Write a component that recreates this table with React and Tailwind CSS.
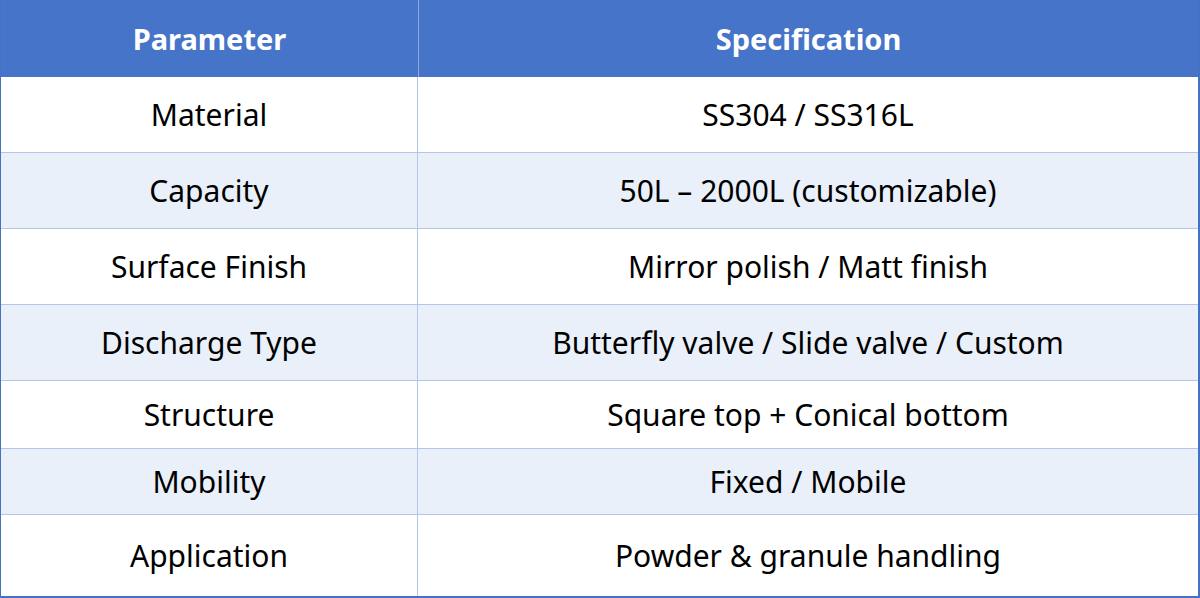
import React from 'react';

const rows = [
  ['Material', 'SS304 / SS316L', 'h-[75px]'],
  ['Capacity', '50L – 2000L (customizable)', 'h-[76px]'],
  ['Surface Finish', 'Mirror polish / Matt finish', 'h-[76px]'],
  ['Discharge Type', 'Butterfly valve / Slide valve / Custom', 'h-[76px]'],
  ['Structure', 'Square top + Conical bottom', 'h-[68px]'],
  ['Mobility', 'Fixed / Mobile', 'h-[66px]'],
  ['Application', 'Powder & granule handling', 'h-[82px]'],
];

export default function App() {
  return (
    <div className="w-[1200px] h-[598px] bg-white" style={{ fontFamily: '"Noto Sans", "Open Sans", sans-serif' }}>
      <div className="w-[1200px] border-l border-r-2 border-b-2 border-[#4472c4]">
        {/* header */}
        <div className="flex h-[77px] bg-[#4674c9] text-white font-bold text-[29px]">
          <div className="w-[418px] flex items-center justify-center border-r border-[#8fa9dc]">Parameter</div>
          <div className="flex-1 flex items-center justify-center">Specification</div>
        </div>
        {rows.map(([name, spec, h], i) => (
          <div
            key={name}
            className={`flex ${h} text-[30px] text-black ${i % 2 === 1 ? 'bg-[#eaf0fa]' : 'bg-white'} ${i > 0 ? 'border-t border-[#b4c6e7]' : ''}`}
          >
            <div className="w-[417px] flex items-center justify-center border-r border-[#b4c6e7]">{name}</div>
            <div className="flex-1 flex items-center justify-center">{spec}</div>
          </div>
        ))}
      </div>
    </div>
  );
}
